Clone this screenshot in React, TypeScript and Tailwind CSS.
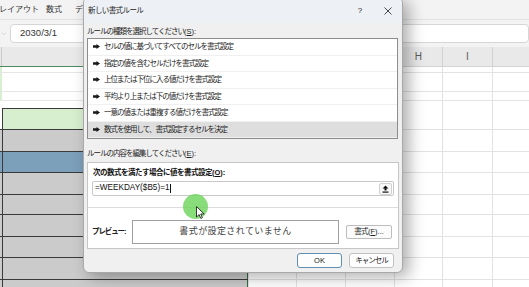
const FONT = "font-['Liberation_Sans','Noto_Sans_CJK_JP',sans-serif]";

const rules = [
  'セルの値に基づいてすべてのセルを書式設定',
  '指定の値を含むセルだけを書式設定',
  '上位または下位に入る値だけを書式設定',
  '平均より上または下の値だけを書式設定',
  '一意の値または重複する値だけを書式設定',
  '数式を使用して、書式設定するセルを決定',
];

type Fill = 'white' | 'band' | 'gray' | 'blue';

// row heights measured from the screenshot, starting under the column header
const rows: { h: number; fill: Fill }[] = [
  { h: 6, fill: 'white' },
  { h: 19, fill: 'white' },
  { h: 9, fill: 'white' },
  { h: 29, fill: 'band' },
  { h: 22, fill: 'gray' },
  { h: 21, fill: 'blue' },
  { h: 22, fill: 'gray' },
  { h: 20, fill: 'gray' },
  { h: 22, fill: 'gray' },
  { h: 21, fill: 'gray' },
  { h: 22, fill: 'gray' },
  { h: 20, fill: 'gray' },
];

const colWidths = ['w-[51px]', 'w-[53px]', 'w-[52px]', 'w-[52px]', 'w-[53px]', 'w-[40px]'];

const tableFill: Record<'gray' | 'blue', string> = {
  gray: 'bg-[#cbcbcb]',
  blue: 'bg-[#7c9fba]',
};

function LeftCell({ fill }: { fill: Fill }) {
  if (fill === 'white') {
    return (
      <div className="flex w-[266px] border-b border-[#e6e6e6] bg-white">
        <div className="w-[2px] bg-[#d9efd1]" />
      </div>
    );
  }
  if (fill === 'band') {
    return (
      <div className="flex w-[266px] flex-col border-b border-[#3a3a3a] bg-white">
        <div className="h-[7px]" />
        <div className="flex flex-1">
          <div className="w-[2px]" />
          <div className="flex-1 border-x border-t border-[#3a3a3a] border-r-[#2f6b43] bg-[#d7efcf]" />
        </div>
      </div>
    );
  }
  return (
    <div className={`flex w-[266px] border-b border-[#3a3a3a] ${tableFill[fill]}`}>
      <div className="w-[2px]" />
      <div className={`flex-1 border-x border-[#3a3a3a] border-r-[#2f6b43] ${tableFill[fill]}`} />
    </div>
  );
}

function Sheet() {
  return (
    <div className="flex flex-col">
      {/* ribbon tabs */}
      <div className="flex h-[20px] items-center border-b border-[#e2e2e2] bg-[#f3f3f3] text-[8px] text-[#333]">
        <span className="-ml-[1px]">レイアウト</span>
        <span className="ml-[7px]">数式</span>
        <span className="ml-[13px]">デ</span>
      </div>
      {/* formula bar */}
      <div className="flex h-[27px] items-start bg-[#f3f3f3] pt-[4px]">
        <span className="w-[10px] pt-[5px] pl-[1px] text-[7px] leading-none text-[#777]">⌵</span>
        <div className="flex h-[19px] flex-1 items-center rounded-[4px] border border-[#d6d6d6] bg-white pl-[9px] text-[9.5px] text-[#333]">
          2030/3/1
        </div>
      </div>
      {/* column header */}
      <div className="flex h-[20px] bg-[#e9e9e9] text-[10px] text-[#5a5a5a]">
        <div className="flex w-[266px] border-b border-[#4f8a60]">
          <div className="w-[2px] border-r border-[#c9c9c9]" />
        </div>
        {['', '', '', 'H', 'I', ''].map((c, i) => (
          <div
            key={i}
            className={`${colWidths[i]} flex items-center justify-center border-b border-l border-[#d2d2d2]`}
          >
            {c}
          </div>
        ))}
      </div>
      {/* cells */}
      {rows.map((r, i) => (
        <div key={i} className="flex" style={{ height: r.h }}>
          <LeftCell fill={r.fill} />
          {colWidths.map((w, j) => (
            <div key={j} className={`${w} border-b border-l border-[#e2e2e2] bg-white`} />
          ))}
        </div>
      ))}
    </div>
  );
}

function RuleArrow() {
  return (
    <svg width="7" height="5" viewBox="0 0 7 5" className="shrink-0">
      <path d="M0 1.2h3.5V0L7 2.5 3.5 5V3.8H0z" fill="#1a1a1a" />
    </svg>
  );
}

function CollapseIcon() {
  return (
    <svg width="7" height="8" viewBox="0 0 7 8">
      <path d="M3.5 0.5 0.5 3.5h2V5.5h2V3.5h2z" fill="#111" />
      <rect x="0.5" y="6.5" width="6" height="1.2" fill="#111" />
    </svg>
  );
}

function Pointer() {
  return (
    <svg width="9" height="13" viewBox="0 0 9 13">
      <path d="M0.5 0.5v10.5l2.6-2.4 1.7 3.8 1.6-0.7-1.7-3.7h3.5z" fill="#fff" stroke="#222" strokeWidth="0.9" strokeLinejoin="round" />
    </svg>
  );
}

// latin part of a label keeps normal spacing
function Key({ k }: { k: string }) {
  return (
    <span className="tracking-normal">
      (<span className="underline">{k}</span>):
    </span>
  );
}

function Dialog() {
  return (
    <div className="absolute left-[83px] top-[-3px] flex h-[276px] w-[320px] flex-col overflow-hidden rounded-[6px] border border-[#a8a8a8] bg-[#f0f0f0] shadow-[6px_4px_16px_rgba(0,0,0,0.32)]">
      {/* title bar */}
      <div className="flex h-[25px] items-center bg-[#edf1f5] pl-[4px] pt-[1px] text-[7.5px] text-[#222]">
        <span className="tracking-[-0.6px]">新しい書式ルール</span>
        <span className="ml-auto flex w-[28px] justify-center text-[8px]">?</span>
        <span className="flex w-[28px] justify-center">
          <svg width="8" height="8" viewBox="0 0 8 8">
            <path d="M0.5 0.5l7 7M7.5 0.5l-7 7" stroke="#333" strokeWidth="0.9" />
          </svg>
        </span>
      </div>

      <div className="flex flex-1 flex-col px-[3px] text-[7.5px] tracking-[-1px] text-[#222]">
        <div className="mt-[3px] h-[12px] leading-[12px]">
          ルールの種類を選択してください<Key k="S" />
        </div>

        {/* rule type list */}
        <div className="mr-[1px] flex h-[101px] flex-col border border-[#8c8c8c] bg-white">
          {rules.map((r, i) => (
            <div
              key={r}
              className={`flex h-[16.5px] items-center gap-[4px] border-b border-[#f0f0f0] pl-[5px] ${
                i === rules.length - 1 ? 'bg-[#dedede]' : ''
              }`}
            >
              <RuleArrow />
              <span>{r}</span>
            </div>
          ))}
        </div>

        <div className="mt-[9px] h-[12px] leading-[12px]">
          ルールの内容を編集してください<Key k="E" />
        </div>

        {/* rule description group */}
        <div className="mt-[2px] flex h-[87px] flex-col border border-[#c6c6c6] bg-white">
          <div className="pl-[5px] pt-[4px] font-bold leading-[12px] tracking-[-0.5px] text-[#111]">
            次の数式を満たす場合に値を書式設定<Key k="O" />
          </div>
          <div className="mx-[4px] mt-[2px] flex h-[15px] items-center rounded-[2px] border border-[#c8c8c8] bg-white pl-[2px] pr-[1px]">
            <span className="text-[8.2px] tracking-normal text-[#111]">=WEEKDAY($B5)=1</span>
            <span className="ml-[1px] h-[9px] w-px bg-[#111]" />
            <span className="ml-auto flex h-[12px] w-[13px] items-center justify-center rounded-[2px] border border-[#d0d0d0] bg-[#f7f7f7]">
              <CollapseIcon />
            </span>
          </div>
          <div className="mt-[11px] border-t border-[#dcdcdc]" />
          <div className="mt-[12px] flex items-center pl-[4px]">
            <span className="w-[40px] font-bold tracking-[-1.1px]">
              プレビュー<span className="tracking-normal">:</span>
            </span>
            <div className="flex h-[24px] w-[207px] items-center justify-center border border-[#a0a0a0] bg-white text-[9px] tracking-[0.4px] text-[#444]">
              書式が設定されていません
            </div>
            <span className="ml-[7px] flex h-[14px] w-[46px] items-center justify-center rounded-[2px] border border-[#bdbdbd] bg-[#fbfbfb] tracking-[-0.6px]">
              書式<span className="tracking-normal">(<span className="underline">F</span>)...</span>
            </span>
          </div>
        </div>

        {/* buttons */}
        <div className="mt-[4px] flex justify-end gap-[7px] pr-[5px]">
          <span className="flex h-[15px] w-[45px] items-center justify-center rounded-[3px] border border-[#5f8fb4] bg-[#fdfdfd] tracking-normal">
            OK
          </span>
          <span className="flex h-[15px] w-[45px] items-center justify-center rounded-[3px] border border-[#c2c2c2] bg-[#fdfdfd]">
            キャンセル
          </span>
        </div>
      </div>
    </div>
  );
}

export default function App() {
  return (
    <div className={`relative h-[287px] w-[529px] overflow-hidden bg-white ${FONT}`}>
      <Sheet />
      <Dialog />
      {/* click highlight + pointer */}
      <div className="absolute left-[183px] top-[194px] h-[25px] w-[25px] rounded-full bg-[#6ad358]/80" />
      <div className="absolute left-[196px] top-[206px]">
        <Pointer />
      </div>
    </div>
  );
}
